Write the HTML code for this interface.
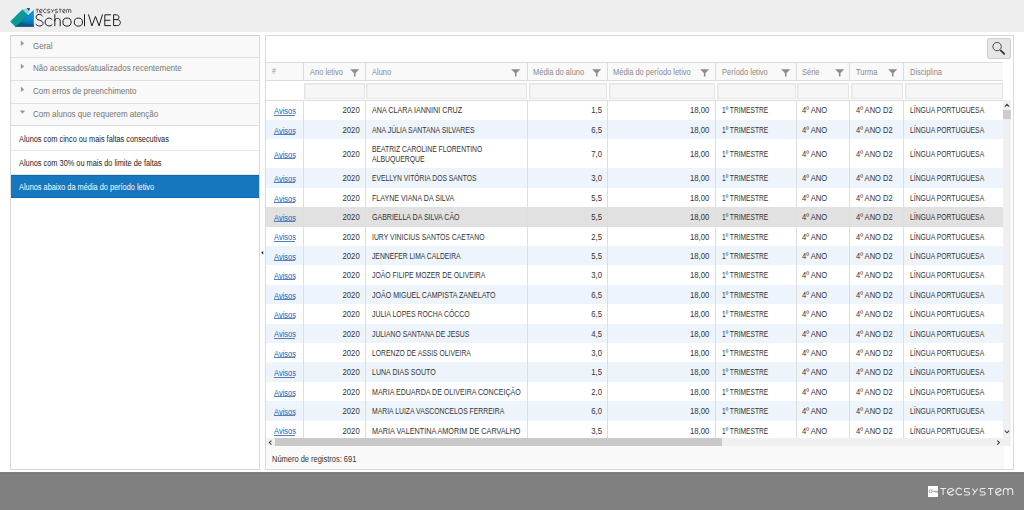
<!DOCTYPE html>
<html><head><meta charset="utf-8"><title>School WEB</title>
<style>
html,body{margin:0;padding:0;width:1024px;height:510px;overflow:hidden;background:#fff;}
body{position:relative;font-family:"Liberation Sans",sans-serif;}
.a{position:absolute;}
.t{position:absolute;white-space:nowrap;line-height:1;}
</style></head><body>
<div class="a" style="left:0.00px;top:0.00px;width:1024.00px;height:31.50px;background:#eeeeee"></div>
<svg class="a" style="left:0;top:0" width="40" height="32" viewBox="0 0 40 32">
<defs><linearGradient id="bg1" x1="0" y1="0" x2="0" y2="1"><stop offset="0" stop-color="#0e9be0"/><stop offset="0.6" stop-color="#0a86cc"/><stop offset="1" stop-color="#0b4f8a"/></linearGradient></defs>
<polygon points="33.8,9.8 33.8,26.8 15.1,26.8" fill="url(#bg1)"/>
<polygon points="15.1,26.8 33.8,26.8 33.8,25.2 21,22.5" fill="#0b5a78" opacity="0.8"/>
<polygon points="10.2,21.6 22.3,9.5 27.8,15 15.6,27" fill="#0a9a94"/>
<polygon points="22.3,9.5 26.2,8.4 29.4,11.6 27.8,15" fill="#8ed4f2"/>
<polygon points="26.5,8.3 29.9,7.9 29.2,11.2" fill="#0c4a52"/>
<line x1="28.0" y1="15.0" x2="15.6" y2="26.9" stroke="#1d5a66" stroke-width="0.7"/>
<line x1="22.5" y1="9.6" x2="27.9" y2="15.0" stroke="#4f8f96" stroke-width="0.6"/>
</svg>
<svg class="a" style="left:0;top:0" width="80" height="20"><path transform="translate(34.74,5.79) scale(0.484,0.54)" d="M2.2,6.5 H8.1 M5.1,6.5 V13 M9.9,11.3 L15.8,8.2 A3.35,3.35 0 1 0 15.6,11.7 M23.9,7.4 A3.35,3.35 0 1 0 23.9,11.6 M31.7,6.5 H28.1 A1.75,1.75 0 0 0 28.1,10 H30 A1.5,1.5 0 0 1 30,13 H26.1 M34.3,6.5 L36.9,9.9 M39.7,6.5 L35,13 M47.4,6.5 H43.8 A1.75,1.75 0 0 0 43.8,10 H45.7 A1.5,1.5 0 0 1 45.7,13 H41.8 M49.9,6.5 H55.4 M52.6,6.5 V13 M57.9,11.3 L63.2,8.2 A3.0,3.35 0 1 0 63.0,11.7 M65.3,13 V8.9 A2.35,2.4 0 0 1 70,8.9 V13 M70,8.9 A2.35,2.4 0 0 1 74.7,8.9 V13" fill="none" stroke="#3a3a3a" stroke-width="1.5"/></svg>
<svg class="a" style="left:0;top:0" width="130" height="32" viewBox="0 0 130 32"><path d="M42.6,16.4 C41.8,15 40.6,14.4 39.3,14.4 C37.4,14.4 36.1,15.6 36.1,17.2 C36.1,18.9 37.4,19.6 39.4,20.2 C41.6,20.8 43.1,21.7 43.1,23.3 C43.1,25 41.6,26 39.5,26 C37.8,26 36.4,25.1 35.6,23.8 M52.3,19.8 A3.95,3.95 0 1 0 52.3,24.3 M54.8,14.2 V26.2 M54.8,21.2 C54.8,19.3 56,18.3 57.6,18.3 C59.2,18.3 60.2,19.3 60.2,21.1 V26.2 M71.1,22.1 A4.1,4.05 0 1 0 62.9,22.1 A4.1,4.05 0 1 0 71.1,22.1 M82.5,22.1 A4.1,4.05 0 1 0 74.3,22.1 A4.1,4.05 0 1 0 82.5,22.1 M84.5,14.2 V26.2 M88.5,14.4 L91.9,25.9 L95.5,16.4 L99.1,25.9 L102.5,14.4 M110.9,14.8 H104.8 V25.6 H110.9 M104.8,20.3 H110.3 M113.6,14.8 V25.6 H117.3 C119.2,25.6 120.3,24.4 120.3,22.5 C120.3,20.7 119.1,19.6 117.1,19.6 H113.6 M116.3,19.6 C117.9,19.6 118.9,18.6 118.9,17.2 C118.9,15.7 117.9,14.8 116.3,14.8 H113.6" fill="none" stroke="#1e1e1e" stroke-width="1.0"/></svg>
<div class="a" style="left:10.25px;top:35.25px;width:249.35px;height:434.25px;background:#fff;border:1px solid #d9d9d9;border-top-color:#cfcfcf;box-sizing:border-box"></div>
<div class="a" style="left:11.25px;top:36.25px;width:247.35px;height:22.15px;background:#f9f9f9;border-bottom:1px solid #dedede;box-sizing:border-box"></div>
<div class="t" style="left:32.50px;top:40.53px;font-size:9.8px;color:#757575;transform:scaleX(0.815);transform-origin:0 0;">Geral</div>
<svg class="a" style="left:20px;top:39.85px" width="6" height="8"><polygon points="0.8,0.6 4.1,3.4 0.8,6.1" fill="#999"/></svg>
<div class="a" style="left:11.25px;top:58.40px;width:247.35px;height:22.60px;background:#f9f9f9;border-bottom:1px solid #dedede;box-sizing:border-box"></div>
<div class="t" style="left:32.50px;top:63.40px;font-size:9.8px;color:#757575;transform:scaleX(0.815);transform-origin:0 0;">Não acessados/atualizados recentemente</div>
<svg class="a" style="left:20px;top:63.00px" width="6" height="8"><polygon points="0.8,0.6 4.1,3.4 0.8,6.1" fill="#999"/></svg>
<div class="a" style="left:11.25px;top:81.00px;width:247.35px;height:22.80px;background:#f9f9f9;border-bottom:1px solid #dedede;box-sizing:border-box"></div>
<div class="t" style="left:32.50px;top:86.10px;font-size:9.8px;color:#757575;transform:scaleX(0.815);transform-origin:0 0;">Com erros de preenchimento</div>
<svg class="a" style="left:20px;top:85.60px" width="6" height="8"><polygon points="0.8,0.6 4.1,3.4 0.8,6.1" fill="#999"/></svg>
<div class="a" style="left:11.25px;top:103.80px;width:247.35px;height:22.70px;background:#f9f9f9;border-bottom:1px solid #dedede;box-sizing:border-box"></div>
<div class="t" style="left:32.50px;top:108.85px;font-size:9.8px;color:#757575;transform:scaleX(0.815);transform-origin:0 0;">Com alunos que requerem atenção</div>
<svg class="a" style="left:19px;top:109.80px" width="8" height="5"><polygon points="0.7,0.6 6.3,0.6 3.5,3.8" fill="#9a9a9a"/></svg>
<div class="a" style="left:11.25px;top:126.50px;width:247.35px;height:24.00px;background:#fff;border-bottom:1px solid #e6e6e6;box-sizing:border-box"></div>
<div class="t" style="left:18.80px;top:135.47px;font-size:8.9px;color:#222;transform:scaleX(0.83);transform-origin:0 0;">Alunos com cinco ou mais faltas consecutivas</div>
<div class="a" style="left:11.25px;top:150.50px;width:247.35px;height:24.00px;background:#fff;border-bottom:1px solid #e6e6e6;box-sizing:border-box"></div>
<div class="t" style="left:18.80px;top:159.47px;font-size:8.9px;color:#222;transform:scaleX(0.83);transform-origin:0 0;">Alunos com 30% ou mais do limite de faltas</div>
<div class="a" style="left:11.25px;top:174.50px;width:247.85px;height:23.70px;background:#1676be;border-top:1px solid #0b69b3;border-bottom:1px solid #0b69b3;box-sizing:border-box"></div>
<div class="t" style="left:18.80px;top:183.32px;font-size:8.9px;color:#ffffff;transform:scaleX(0.83);transform-origin:0 0;">Alunos abaixo da média do período letivo</div>
<svg class="a" style="left:260px;top:250px" width="5" height="6"><polygon points="1.2,2.7 3.2,1.0 3.2,4.4" fill="#111"/></svg>
<div class="a" style="left:265.25px;top:35.25px;width:748.35px;height:434.25px;background:#fff;border:1px solid #d9d9d9;box-sizing:border-box"></div>
<div class="a" style="left:987.10px;top:38.10px;width:23.80px;height:20.60px;background:#e6e6e6;border:1px solid #cfcfcf;border-radius:2px;box-sizing:border-box"></div>
<svg class="a" style="left:990px;top:40px" width="18" height="18" viewBox="0 0 18 18">
<circle cx="7.1" cy="6.6" r="4.2" fill="none" stroke="#3a3a3a" stroke-width="0.9"/>
<line x1="10.9" y1="10.6" x2="14.2" y2="13.8" stroke="#333" stroke-width="1.8" stroke-linecap="round"/>
</svg>
<div class="a" style="left:266.25px;top:62.00px;width:736.95px;height:18.50px;background:#f9f9f9;border-top:1px solid #dcdcdc;border-bottom:1px solid #dcdcdc;box-sizing:border-box"></div>
<div class="a" style="left:266.25px;top:80.50px;width:736.95px;height:19.90px;background:#fff"></div>
<div class="a" style="left:302.90px;top:63.00px;width:1.00px;height:16.50px;background:#dcdcdc"></div>
<div class="a" style="left:364.75px;top:63.00px;width:1.00px;height:16.50px;background:#dcdcdc"></div>
<div class="a" style="left:527.00px;top:63.00px;width:1.00px;height:16.50px;background:#dcdcdc"></div>
<div class="a" style="left:607.00px;top:63.00px;width:1.00px;height:16.50px;background:#dcdcdc"></div>
<div class="a" style="left:715.25px;top:63.00px;width:1.00px;height:16.50px;background:#dcdcdc"></div>
<div class="a" style="left:795.75px;top:63.00px;width:1.00px;height:16.50px;background:#dcdcdc"></div>
<div class="a" style="left:849.25px;top:63.00px;width:1.00px;height:16.50px;background:#dcdcdc"></div>
<div class="a" style="left:903.00px;top:63.00px;width:1.00px;height:16.50px;background:#dcdcdc"></div>
<div class="a" style="left:304.40px;top:83.00px;width:60.25px;height:15.60px;background:#f6f6f6;border:1px solid #e4e4e4;box-sizing:border-box;box-shadow:inset 1px 1px 0 #eeeeee"></div>
<div class="a" style="left:366.25px;top:83.00px;width:160.65px;height:15.60px;background:#f6f6f6;border:1px solid #e4e4e4;box-sizing:border-box;box-shadow:inset 1px 1px 0 #eeeeee"></div>
<div class="a" style="left:528.50px;top:83.00px;width:78.40px;height:15.60px;background:#f6f6f6;border:1px solid #e4e4e4;box-sizing:border-box;box-shadow:inset 1px 1px 0 #eeeeee"></div>
<div class="a" style="left:608.50px;top:83.00px;width:106.65px;height:15.60px;background:#f6f6f6;border:1px solid #e4e4e4;box-sizing:border-box;box-shadow:inset 1px 1px 0 #eeeeee"></div>
<div class="a" style="left:716.75px;top:83.00px;width:78.90px;height:15.60px;background:#f6f6f6;border:1px solid #e4e4e4;box-sizing:border-box;box-shadow:inset 1px 1px 0 #eeeeee"></div>
<div class="a" style="left:797.25px;top:83.00px;width:51.90px;height:15.60px;background:#f6f6f6;border:1px solid #e4e4e4;box-sizing:border-box;box-shadow:inset 1px 1px 0 #eeeeee"></div>
<div class="a" style="left:850.75px;top:83.00px;width:52.15px;height:15.60px;background:#f6f6f6;border:1px solid #e4e4e4;box-sizing:border-box;box-shadow:inset 1px 1px 0 #eeeeee"></div>
<div class="a" style="left:904.50px;top:83.00px;width:98.10px;height:15.60px;background:#f6f6f6;border:1px solid #e4e4e4;box-sizing:border-box;box-shadow:inset 1px 1px 0 #eeeeee"></div>
<div class="t" style="left:272.00px;top:68.46px;font-size:8.2px;color:#999;transform:scaleX(0.85);transform-origin:0 0;">#</div>
<div class="t" style="left:309.50px;top:68.15px;font-size:8.8px;color:#8a8a8a;transform:scaleX(0.85);transform-origin:0 0;">Ano letivo</div>
<div class="t" style="left:371.50px;top:68.15px;font-size:8.8px;color:#8a8a8a;transform:scaleX(0.85);transform-origin:0 0;">Aluno</div>
<div class="t" style="left:533.25px;top:68.15px;font-size:8.8px;color:#8a8a8a;transform:scaleX(0.85);transform-origin:0 0;">Média do aluno</div>
<div class="t" style="left:613.25px;top:68.15px;font-size:8.8px;color:#8a8a8a;transform:scaleX(0.85);transform-origin:0 0;">Média do período letivo</div>
<div class="t" style="left:721.50px;top:68.15px;font-size:8.8px;color:#8a8a8a;transform:scaleX(0.85);transform-origin:0 0;">Período letivo</div>
<div class="t" style="left:801.75px;top:68.15px;font-size:8.8px;color:#8a8a8a;transform:scaleX(0.85);transform-origin:0 0;">Série</div>
<div class="t" style="left:855.50px;top:68.15px;font-size:8.8px;color:#8a8a8a;transform:scaleX(0.85);transform-origin:0 0;">Turma</div>
<div class="t" style="left:909.75px;top:68.15px;font-size:8.8px;color:#8a8a8a;transform:scaleX(0.85);transform-origin:0 0;">Disciplina</div>
<svg class="a" style="left:350.20px;top:68.8px" width="10" height="8" viewBox="0 0 10 8"><polygon points="0.1,0.2 9.3,0.2 5.5,4.0 5.5,7.6 3.9,7.6 3.9,4.0" fill="#8c8c8c"/></svg>
<svg class="a" style="left:511.45px;top:68.8px" width="10" height="8" viewBox="0 0 10 8"><polygon points="0.1,0.2 9.3,0.2 5.5,4.0 5.5,7.6 3.9,7.6 3.9,4.0" fill="#8c8c8c"/></svg>
<svg class="a" style="left:592.20px;top:68.8px" width="10" height="8" viewBox="0 0 10 8"><polygon points="0.1,0.2 9.3,0.2 5.5,4.0 5.5,7.6 3.9,7.6 3.9,4.0" fill="#8c8c8c"/></svg>
<svg class="a" style="left:700.20px;top:68.8px" width="10" height="8" viewBox="0 0 10 8"><polygon points="0.1,0.2 9.3,0.2 5.5,4.0 5.5,7.6 3.9,7.6 3.9,4.0" fill="#8c8c8c"/></svg>
<svg class="a" style="left:780.70px;top:68.8px" width="10" height="8" viewBox="0 0 10 8"><polygon points="0.1,0.2 9.3,0.2 5.5,4.0 5.5,7.6 3.9,7.6 3.9,4.0" fill="#8c8c8c"/></svg>
<svg class="a" style="left:834.95px;top:68.8px" width="10" height="8" viewBox="0 0 10 8"><polygon points="0.1,0.2 9.3,0.2 5.5,4.0 5.5,7.6 3.9,7.6 3.9,4.0" fill="#8c8c8c"/></svg>
<svg class="a" style="left:888.20px;top:68.8px" width="10" height="8" viewBox="0 0 10 8"><polygon points="0.1,0.2 9.3,0.2 5.5,4.0 5.5,7.6 3.9,7.6 3.9,4.0" fill="#8c8c8c"/></svg>
<div class="a" style="left:266.25px;top:100.4px;width:736.95px;height:337.50px;overflow:hidden">
<div class="a" style="left:0;top:0.00px;width:736.95px;height:19.41px;background:#fff"></div>
<div class="a" style="left:0;top:19.41px;width:736.95px;height:19.41px;background:#edf4fb"></div>
<div class="a" style="left:0;top:38.82px;width:736.95px;height:29.12px;background:#fff"></div>
<div class="a" style="left:0;top:67.94px;width:736.95px;height:19.41px;background:#edf4fb"></div>
<div class="a" style="left:0;top:87.35px;width:736.95px;height:19.41px;background:#fff"></div>
<div class="a" style="left:0;top:106.76px;width:736.95px;height:19.41px;background:#e1e1e1"></div>
<div class="a" style="left:0;top:126.17px;width:736.95px;height:19.41px;background:#fff"></div>
<div class="a" style="left:0;top:145.58px;width:736.95px;height:19.41px;background:#edf4fb"></div>
<div class="a" style="left:0;top:164.99px;width:736.95px;height:19.41px;background:#fff"></div>
<div class="a" style="left:0;top:184.40px;width:736.95px;height:19.41px;background:#edf4fb"></div>
<div class="a" style="left:0;top:203.81px;width:736.95px;height:19.41px;background:#fff"></div>
<div class="a" style="left:0;top:223.22px;width:736.95px;height:19.41px;background:#edf4fb"></div>
<div class="a" style="left:0;top:242.63px;width:736.95px;height:19.41px;background:#fff"></div>
<div class="a" style="left:0;top:262.04px;width:736.95px;height:19.41px;background:#edf4fb"></div>
<div class="a" style="left:0;top:281.45px;width:736.95px;height:19.41px;background:#fff"></div>
<div class="a" style="left:0;top:300.86px;width:736.95px;height:19.41px;background:#edf4fb"></div>
<div class="a" style="left:0;top:320.27px;width:736.95px;height:19.41px;background:#fff"></div>
<div class="a" style="left:36.65px;top:0;width:1px;height:337.50px;background:#dedede"></div>
<div class="a" style="left:98.50px;top:0;width:1px;height:337.50px;background:#dedede"></div>
<div class="a" style="left:260.75px;top:0;width:1px;height:337.50px;background:#dedede"></div>
<div class="a" style="left:340.75px;top:0;width:1px;height:337.50px;background:#dedede"></div>
<div class="a" style="left:449.00px;top:0;width:1px;height:337.50px;background:#dedede"></div>
<div class="a" style="left:529.50px;top:0;width:1px;height:337.50px;background:#dedede"></div>
<div class="a" style="left:583.00px;top:0;width:1px;height:337.50px;background:#dedede"></div>
<div class="a" style="left:636.75px;top:0;width:1px;height:337.50px;background:#dedede"></div>
</div>
<div class="a" style="left:0;top:100.4px;width:1024px;height:337.50px;overflow:hidden">
<div class="t" style="left:274.40px;top:6.83px;font-size:9.3px;color:#2563b0;transform:scaleX(0.81);transform-origin:0 0;">Avisos</div>
<div class="a" style="left:274.4px;top:14.11px;width:21px;height:1px;background:#4a82c4"></div>
<div class="t" style="right:664.30px;top:6.03px;font-size:9.3px;color:#333333;transform:scaleX(0.83);transform-origin:100% 0;">2020</div>
<div class="t" style="left:371.50px;top:6.03px;font-size:9.3px;color:#333333;transform:scaleX(0.772);transform-origin:0 0;">ANA CLARA IANNINI CRUZ</div>
<div class="t" style="right:422.20px;top:6.03px;font-size:9.3px;color:#333333;transform:scaleX(0.83);transform-origin:100% 0;">1,5</div>
<div class="t" style="right:314.40px;top:6.03px;font-size:9.3px;color:#333333;transform:scaleX(0.83);transform-origin:100% 0;">18,00</div>
<div class="t" style="left:721.50px;top:6.03px;font-size:9.3px;color:#333333;transform:scaleX(0.715);transform-origin:0 0;">1º TRIMESTRE</div>
<div class="t" style="left:801.75px;top:6.03px;font-size:9.3px;color:#333333;transform:scaleX(0.82);transform-origin:0 0;">4º ANO</div>
<div class="t" style="left:855.50px;top:6.03px;font-size:9.3px;color:#333333;transform:scaleX(0.81);transform-origin:0 0;">4º ANO D2</div>
<div class="t" style="left:909.75px;top:6.03px;font-size:9.3px;color:#333333;transform:scaleX(0.73);transform-origin:0 0;">LÍNGUA PORTUGUESA</div>
<div class="t" style="left:274.40px;top:26.24px;font-size:9.3px;color:#2563b0;transform:scaleX(0.81);transform-origin:0 0;">Avisos</div>
<div class="a" style="left:274.4px;top:33.52px;width:21px;height:1px;background:#4a82c4"></div>
<div class="t" style="right:664.30px;top:25.44px;font-size:9.3px;color:#333333;transform:scaleX(0.83);transform-origin:100% 0;">2020</div>
<div class="t" style="left:371.50px;top:25.44px;font-size:9.3px;color:#333333;transform:scaleX(0.743);transform-origin:0 0;">ANA JÚLIA SANTANA SILVARES</div>
<div class="t" style="right:422.20px;top:25.44px;font-size:9.3px;color:#333333;transform:scaleX(0.83);transform-origin:100% 0;">6,5</div>
<div class="t" style="right:314.40px;top:25.44px;font-size:9.3px;color:#333333;transform:scaleX(0.83);transform-origin:100% 0;">18,00</div>
<div class="t" style="left:721.50px;top:25.44px;font-size:9.3px;color:#333333;transform:scaleX(0.715);transform-origin:0 0;">1º TRIMESTRE</div>
<div class="t" style="left:801.75px;top:25.44px;font-size:9.3px;color:#333333;transform:scaleX(0.82);transform-origin:0 0;">4º ANO</div>
<div class="t" style="left:855.50px;top:25.44px;font-size:9.3px;color:#333333;transform:scaleX(0.81);transform-origin:0 0;">4º ANO D2</div>
<div class="t" style="left:909.75px;top:25.44px;font-size:9.3px;color:#333333;transform:scaleX(0.73);transform-origin:0 0;">LÍNGUA PORTUGUESA</div>
<div class="t" style="left:274.40px;top:50.51px;font-size:9.3px;color:#2563b0;transform:scaleX(0.81);transform-origin:0 0;">Avisos</div>
<div class="a" style="left:274.4px;top:57.78px;width:21px;height:1px;background:#4a82c4"></div>
<div class="t" style="right:664.30px;top:49.71px;font-size:9.3px;color:#333333;transform:scaleX(0.83);transform-origin:100% 0;">2020</div>
<div class="t" style="left:371.50px;top:44.81px;font-size:9.3px;color:#333333;transform:scaleX(0.729);transform-origin:0 0;">BEATRIZ CAROLINE FLORENTINO</div>
<div class="t" style="left:371.50px;top:54.61px;font-size:9.3px;color:#333333;transform:scaleX(0.738);transform-origin:0 0;">ALBUQUERQUE</div>
<div class="t" style="right:422.20px;top:49.71px;font-size:9.3px;color:#333333;transform:scaleX(0.83);transform-origin:100% 0;">7,0</div>
<div class="t" style="right:314.40px;top:49.71px;font-size:9.3px;color:#333333;transform:scaleX(0.83);transform-origin:100% 0;">18,00</div>
<div class="t" style="left:721.50px;top:49.71px;font-size:9.3px;color:#333333;transform:scaleX(0.715);transform-origin:0 0;">1º TRIMESTRE</div>
<div class="t" style="left:801.75px;top:49.71px;font-size:9.3px;color:#333333;transform:scaleX(0.82);transform-origin:0 0;">4º ANO</div>
<div class="t" style="left:855.50px;top:49.71px;font-size:9.3px;color:#333333;transform:scaleX(0.81);transform-origin:0 0;">4º ANO D2</div>
<div class="t" style="left:909.75px;top:49.71px;font-size:9.3px;color:#333333;transform:scaleX(0.73);transform-origin:0 0;">LÍNGUA PORTUGUESA</div>
<div class="t" style="left:274.40px;top:74.77px;font-size:9.3px;color:#2563b0;transform:scaleX(0.81);transform-origin:0 0;">Avisos</div>
<div class="a" style="left:274.4px;top:82.05px;width:21px;height:1px;background:#4a82c4"></div>
<div class="t" style="right:664.30px;top:73.97px;font-size:9.3px;color:#333333;transform:scaleX(0.83);transform-origin:100% 0;">2020</div>
<div class="t" style="left:371.50px;top:73.97px;font-size:9.3px;color:#333333;transform:scaleX(0.726);transform-origin:0 0;">EVELLYN VITÓRIA DOS SANTOS</div>
<div class="t" style="right:422.20px;top:73.97px;font-size:9.3px;color:#333333;transform:scaleX(0.83);transform-origin:100% 0;">3,0</div>
<div class="t" style="right:314.40px;top:73.97px;font-size:9.3px;color:#333333;transform:scaleX(0.83);transform-origin:100% 0;">18,00</div>
<div class="t" style="left:721.50px;top:73.97px;font-size:9.3px;color:#333333;transform:scaleX(0.715);transform-origin:0 0;">1º TRIMESTRE</div>
<div class="t" style="left:801.75px;top:73.97px;font-size:9.3px;color:#333333;transform:scaleX(0.82);transform-origin:0 0;">4º ANO</div>
<div class="t" style="left:855.50px;top:73.97px;font-size:9.3px;color:#333333;transform:scaleX(0.81);transform-origin:0 0;">4º ANO D2</div>
<div class="t" style="left:909.75px;top:73.97px;font-size:9.3px;color:#333333;transform:scaleX(0.73);transform-origin:0 0;">LÍNGUA PORTUGUESA</div>
<div class="t" style="left:274.40px;top:94.18px;font-size:9.3px;color:#2563b0;transform:scaleX(0.81);transform-origin:0 0;">Avisos</div>
<div class="a" style="left:274.4px;top:101.45px;width:21px;height:1px;background:#4a82c4"></div>
<div class="t" style="right:664.30px;top:93.38px;font-size:9.3px;color:#333333;transform:scaleX(0.83);transform-origin:100% 0;">2020</div>
<div class="t" style="left:371.50px;top:93.38px;font-size:9.3px;color:#333333;transform:scaleX(0.761);transform-origin:0 0;">FLAYNE VIANA DA SILVA</div>
<div class="t" style="right:422.20px;top:93.38px;font-size:9.3px;color:#333333;transform:scaleX(0.83);transform-origin:100% 0;">5,5</div>
<div class="t" style="right:314.40px;top:93.38px;font-size:9.3px;color:#333333;transform:scaleX(0.83);transform-origin:100% 0;">18,00</div>
<div class="t" style="left:721.50px;top:93.38px;font-size:9.3px;color:#333333;transform:scaleX(0.715);transform-origin:0 0;">1º TRIMESTRE</div>
<div class="t" style="left:801.75px;top:93.38px;font-size:9.3px;color:#333333;transform:scaleX(0.82);transform-origin:0 0;">4º ANO</div>
<div class="t" style="left:855.50px;top:93.38px;font-size:9.3px;color:#333333;transform:scaleX(0.81);transform-origin:0 0;">4º ANO D2</div>
<div class="t" style="left:909.75px;top:93.38px;font-size:9.3px;color:#333333;transform:scaleX(0.73);transform-origin:0 0;">LÍNGUA PORTUGUESA</div>
<div class="t" style="left:274.40px;top:113.59px;font-size:9.3px;color:#2563b0;transform:scaleX(0.81);transform-origin:0 0;">Avisos</div>
<div class="a" style="left:274.4px;top:120.86px;width:21px;height:1px;background:#4a82c4"></div>
<div class="t" style="right:664.30px;top:112.79px;font-size:9.3px;color:#333333;transform:scaleX(0.83);transform-origin:100% 0;">2020</div>
<div class="t" style="left:371.50px;top:112.79px;font-size:9.3px;color:#333333;transform:scaleX(0.755);transform-origin:0 0;">GABRIELLA DA SILVA CÃO</div>
<div class="t" style="right:422.20px;top:112.79px;font-size:9.3px;color:#333333;transform:scaleX(0.83);transform-origin:100% 0;">5,5</div>
<div class="t" style="right:314.40px;top:112.79px;font-size:9.3px;color:#333333;transform:scaleX(0.83);transform-origin:100% 0;">18,00</div>
<div class="t" style="left:721.50px;top:112.79px;font-size:9.3px;color:#333333;transform:scaleX(0.715);transform-origin:0 0;">1º TRIMESTRE</div>
<div class="t" style="left:801.75px;top:112.79px;font-size:9.3px;color:#333333;transform:scaleX(0.82);transform-origin:0 0;">4º ANO</div>
<div class="t" style="left:855.50px;top:112.79px;font-size:9.3px;color:#333333;transform:scaleX(0.81);transform-origin:0 0;">4º ANO D2</div>
<div class="t" style="left:909.75px;top:112.79px;font-size:9.3px;color:#333333;transform:scaleX(0.73);transform-origin:0 0;">LÍNGUA PORTUGUESA</div>
<div class="t" style="left:274.40px;top:133.00px;font-size:9.3px;color:#2563b0;transform:scaleX(0.81);transform-origin:0 0;">Avisos</div>
<div class="a" style="left:274.4px;top:140.27px;width:21px;height:1px;background:#4a82c4"></div>
<div class="t" style="right:664.30px;top:132.20px;font-size:9.3px;color:#333333;transform:scaleX(0.83);transform-origin:100% 0;">2020</div>
<div class="t" style="left:371.50px;top:132.20px;font-size:9.3px;color:#333333;transform:scaleX(0.739);transform-origin:0 0;">IURY VINICIUS SANTOS CAETANO</div>
<div class="t" style="right:422.20px;top:132.20px;font-size:9.3px;color:#333333;transform:scaleX(0.83);transform-origin:100% 0;">2,5</div>
<div class="t" style="right:314.40px;top:132.20px;font-size:9.3px;color:#333333;transform:scaleX(0.83);transform-origin:100% 0;">18,00</div>
<div class="t" style="left:721.50px;top:132.20px;font-size:9.3px;color:#333333;transform:scaleX(0.715);transform-origin:0 0;">1º TRIMESTRE</div>
<div class="t" style="left:801.75px;top:132.20px;font-size:9.3px;color:#333333;transform:scaleX(0.82);transform-origin:0 0;">4º ANO</div>
<div class="t" style="left:855.50px;top:132.20px;font-size:9.3px;color:#333333;transform:scaleX(0.81);transform-origin:0 0;">4º ANO D2</div>
<div class="t" style="left:909.75px;top:132.20px;font-size:9.3px;color:#333333;transform:scaleX(0.73);transform-origin:0 0;">LÍNGUA PORTUGUESA</div>
<div class="t" style="left:274.40px;top:152.41px;font-size:9.3px;color:#2563b0;transform:scaleX(0.81);transform-origin:0 0;">Avisos</div>
<div class="a" style="left:274.4px;top:159.68px;width:21px;height:1px;background:#4a82c4"></div>
<div class="t" style="right:664.30px;top:151.61px;font-size:9.3px;color:#333333;transform:scaleX(0.83);transform-origin:100% 0;">2020</div>
<div class="t" style="left:371.50px;top:151.61px;font-size:9.3px;color:#333333;transform:scaleX(0.726);transform-origin:0 0;">JENNEFER LIMA CALDEIRA</div>
<div class="t" style="right:422.20px;top:151.61px;font-size:9.3px;color:#333333;transform:scaleX(0.83);transform-origin:100% 0;">5,5</div>
<div class="t" style="right:314.40px;top:151.61px;font-size:9.3px;color:#333333;transform:scaleX(0.83);transform-origin:100% 0;">18,00</div>
<div class="t" style="left:721.50px;top:151.61px;font-size:9.3px;color:#333333;transform:scaleX(0.715);transform-origin:0 0;">1º TRIMESTRE</div>
<div class="t" style="left:801.75px;top:151.61px;font-size:9.3px;color:#333333;transform:scaleX(0.82);transform-origin:0 0;">4º ANO</div>
<div class="t" style="left:855.50px;top:151.61px;font-size:9.3px;color:#333333;transform:scaleX(0.81);transform-origin:0 0;">4º ANO D2</div>
<div class="t" style="left:909.75px;top:151.61px;font-size:9.3px;color:#333333;transform:scaleX(0.73);transform-origin:0 0;">LÍNGUA PORTUGUESA</div>
<div class="t" style="left:274.40px;top:171.82px;font-size:9.3px;color:#2563b0;transform:scaleX(0.81);transform-origin:0 0;">Avisos</div>
<div class="a" style="left:274.4px;top:179.09px;width:21px;height:1px;background:#4a82c4"></div>
<div class="t" style="right:664.30px;top:171.02px;font-size:9.3px;color:#333333;transform:scaleX(0.83);transform-origin:100% 0;">2020</div>
<div class="t" style="left:371.50px;top:171.02px;font-size:9.3px;color:#333333;transform:scaleX(0.739);transform-origin:0 0;">JOÃO FILIPE MOZER DE OLIVEIRA</div>
<div class="t" style="right:422.20px;top:171.02px;font-size:9.3px;color:#333333;transform:scaleX(0.83);transform-origin:100% 0;">3,0</div>
<div class="t" style="right:314.40px;top:171.02px;font-size:9.3px;color:#333333;transform:scaleX(0.83);transform-origin:100% 0;">18,00</div>
<div class="t" style="left:721.50px;top:171.02px;font-size:9.3px;color:#333333;transform:scaleX(0.715);transform-origin:0 0;">1º TRIMESTRE</div>
<div class="t" style="left:801.75px;top:171.02px;font-size:9.3px;color:#333333;transform:scaleX(0.82);transform-origin:0 0;">4º ANO</div>
<div class="t" style="left:855.50px;top:171.02px;font-size:9.3px;color:#333333;transform:scaleX(0.81);transform-origin:0 0;">4º ANO D2</div>
<div class="t" style="left:909.75px;top:171.02px;font-size:9.3px;color:#333333;transform:scaleX(0.73);transform-origin:0 0;">LÍNGUA PORTUGUESA</div>
<div class="t" style="left:274.40px;top:191.23px;font-size:9.3px;color:#2563b0;transform:scaleX(0.81);transform-origin:0 0;">Avisos</div>
<div class="a" style="left:274.4px;top:198.50px;width:21px;height:1px;background:#4a82c4"></div>
<div class="t" style="right:664.30px;top:190.43px;font-size:9.3px;color:#333333;transform:scaleX(0.83);transform-origin:100% 0;">2020</div>
<div class="t" style="left:371.50px;top:190.43px;font-size:9.3px;color:#333333;transform:scaleX(0.758);transform-origin:0 0;">JOÃO MIGUEL CAMPISTA ZANELATO</div>
<div class="t" style="right:422.20px;top:190.43px;font-size:9.3px;color:#333333;transform:scaleX(0.83);transform-origin:100% 0;">6,5</div>
<div class="t" style="right:314.40px;top:190.43px;font-size:9.3px;color:#333333;transform:scaleX(0.83);transform-origin:100% 0;">18,00</div>
<div class="t" style="left:721.50px;top:190.43px;font-size:9.3px;color:#333333;transform:scaleX(0.715);transform-origin:0 0;">1º TRIMESTRE</div>
<div class="t" style="left:801.75px;top:190.43px;font-size:9.3px;color:#333333;transform:scaleX(0.82);transform-origin:0 0;">4º ANO</div>
<div class="t" style="left:855.50px;top:190.43px;font-size:9.3px;color:#333333;transform:scaleX(0.81);transform-origin:0 0;">4º ANO D2</div>
<div class="t" style="left:909.75px;top:190.43px;font-size:9.3px;color:#333333;transform:scaleX(0.73);transform-origin:0 0;">LÍNGUA PORTUGUESA</div>
<div class="t" style="left:274.40px;top:210.64px;font-size:9.3px;color:#2563b0;transform:scaleX(0.81);transform-origin:0 0;">Avisos</div>
<div class="a" style="left:274.4px;top:217.91px;width:21px;height:1px;background:#4a82c4"></div>
<div class="t" style="right:664.30px;top:209.84px;font-size:9.3px;color:#333333;transform:scaleX(0.83);transform-origin:100% 0;">2020</div>
<div class="t" style="left:371.50px;top:209.84px;font-size:9.3px;color:#333333;transform:scaleX(0.745);transform-origin:0 0;">JULIA LOPES ROCHA CÔCCO</div>
<div class="t" style="right:422.20px;top:209.84px;font-size:9.3px;color:#333333;transform:scaleX(0.83);transform-origin:100% 0;">6,5</div>
<div class="t" style="right:314.40px;top:209.84px;font-size:9.3px;color:#333333;transform:scaleX(0.83);transform-origin:100% 0;">18,00</div>
<div class="t" style="left:721.50px;top:209.84px;font-size:9.3px;color:#333333;transform:scaleX(0.715);transform-origin:0 0;">1º TRIMESTRE</div>
<div class="t" style="left:801.75px;top:209.84px;font-size:9.3px;color:#333333;transform:scaleX(0.82);transform-origin:0 0;">4º ANO</div>
<div class="t" style="left:855.50px;top:209.84px;font-size:9.3px;color:#333333;transform:scaleX(0.81);transform-origin:0 0;">4º ANO D2</div>
<div class="t" style="left:909.75px;top:209.84px;font-size:9.3px;color:#333333;transform:scaleX(0.73);transform-origin:0 0;">LÍNGUA PORTUGUESA</div>
<div class="t" style="left:274.40px;top:230.05px;font-size:9.3px;color:#2563b0;transform:scaleX(0.81);transform-origin:0 0;">Avisos</div>
<div class="a" style="left:274.4px;top:237.33px;width:21px;height:1px;background:#4a82c4"></div>
<div class="t" style="right:664.30px;top:229.25px;font-size:9.3px;color:#333333;transform:scaleX(0.83);transform-origin:100% 0;">2020</div>
<div class="t" style="left:371.50px;top:229.25px;font-size:9.3px;color:#333333;transform:scaleX(0.733);transform-origin:0 0;">JULIANO SANTANA DE JESUS</div>
<div class="t" style="right:422.20px;top:229.25px;font-size:9.3px;color:#333333;transform:scaleX(0.83);transform-origin:100% 0;">4,5</div>
<div class="t" style="right:314.40px;top:229.25px;font-size:9.3px;color:#333333;transform:scaleX(0.83);transform-origin:100% 0;">18,00</div>
<div class="t" style="left:721.50px;top:229.25px;font-size:9.3px;color:#333333;transform:scaleX(0.715);transform-origin:0 0;">1º TRIMESTRE</div>
<div class="t" style="left:801.75px;top:229.25px;font-size:9.3px;color:#333333;transform:scaleX(0.82);transform-origin:0 0;">4º ANO</div>
<div class="t" style="left:855.50px;top:229.25px;font-size:9.3px;color:#333333;transform:scaleX(0.81);transform-origin:0 0;">4º ANO D2</div>
<div class="t" style="left:909.75px;top:229.25px;font-size:9.3px;color:#333333;transform:scaleX(0.73);transform-origin:0 0;">LÍNGUA PORTUGUESA</div>
<div class="t" style="left:274.40px;top:249.46px;font-size:9.3px;color:#2563b0;transform:scaleX(0.81);transform-origin:0 0;">Avisos</div>
<div class="a" style="left:274.4px;top:256.74px;width:21px;height:1px;background:#4a82c4"></div>
<div class="t" style="right:664.30px;top:248.66px;font-size:9.3px;color:#333333;transform:scaleX(0.83);transform-origin:100% 0;">2020</div>
<div class="t" style="left:371.50px;top:248.66px;font-size:9.3px;color:#333333;transform:scaleX(0.73);transform-origin:0 0;">LORENZO DE ASSIS OLIVEIRA</div>
<div class="t" style="right:422.20px;top:248.66px;font-size:9.3px;color:#333333;transform:scaleX(0.83);transform-origin:100% 0;">3,0</div>
<div class="t" style="right:314.40px;top:248.66px;font-size:9.3px;color:#333333;transform:scaleX(0.83);transform-origin:100% 0;">18,00</div>
<div class="t" style="left:721.50px;top:248.66px;font-size:9.3px;color:#333333;transform:scaleX(0.715);transform-origin:0 0;">1º TRIMESTRE</div>
<div class="t" style="left:801.75px;top:248.66px;font-size:9.3px;color:#333333;transform:scaleX(0.82);transform-origin:0 0;">4º ANO</div>
<div class="t" style="left:855.50px;top:248.66px;font-size:9.3px;color:#333333;transform:scaleX(0.81);transform-origin:0 0;">4º ANO D2</div>
<div class="t" style="left:909.75px;top:248.66px;font-size:9.3px;color:#333333;transform:scaleX(0.73);transform-origin:0 0;">LÍNGUA PORTUGUESA</div>
<div class="t" style="left:274.40px;top:268.87px;font-size:9.3px;color:#2563b0;transform:scaleX(0.81);transform-origin:0 0;">Avisos</div>
<div class="a" style="left:274.4px;top:276.15px;width:21px;height:1px;background:#4a82c4"></div>
<div class="t" style="right:664.30px;top:268.07px;font-size:9.3px;color:#333333;transform:scaleX(0.83);transform-origin:100% 0;">2020</div>
<div class="t" style="left:371.50px;top:268.07px;font-size:9.3px;color:#333333;transform:scaleX(0.759);transform-origin:0 0;">LUNA DIAS SOUTO</div>
<div class="t" style="right:422.20px;top:268.07px;font-size:9.3px;color:#333333;transform:scaleX(0.83);transform-origin:100% 0;">1,5</div>
<div class="t" style="right:314.40px;top:268.07px;font-size:9.3px;color:#333333;transform:scaleX(0.83);transform-origin:100% 0;">18,00</div>
<div class="t" style="left:721.50px;top:268.07px;font-size:9.3px;color:#333333;transform:scaleX(0.715);transform-origin:0 0;">1º TRIMESTRE</div>
<div class="t" style="left:801.75px;top:268.07px;font-size:9.3px;color:#333333;transform:scaleX(0.82);transform-origin:0 0;">4º ANO</div>
<div class="t" style="left:855.50px;top:268.07px;font-size:9.3px;color:#333333;transform:scaleX(0.81);transform-origin:0 0;">4º ANO D2</div>
<div class="t" style="left:909.75px;top:268.07px;font-size:9.3px;color:#333333;transform:scaleX(0.73);transform-origin:0 0;">LÍNGUA PORTUGUESA</div>
<div class="t" style="left:274.40px;top:288.28px;font-size:9.3px;color:#2563b0;transform:scaleX(0.81);transform-origin:0 0;">Avisos</div>
<div class="a" style="left:274.4px;top:295.56px;width:21px;height:1px;background:#4a82c4"></div>
<div class="t" style="right:664.30px;top:287.48px;font-size:9.3px;color:#333333;transform:scaleX(0.83);transform-origin:100% 0;">2020</div>
<div class="t" style="left:371.50px;top:287.48px;font-size:9.3px;color:#333333;transform:scaleX(0.76);transform-origin:0 0;">MARIA EDUARDA DE OLIVEIRA CONCEIÇÃO</div>
<div class="t" style="right:422.20px;top:287.48px;font-size:9.3px;color:#333333;transform:scaleX(0.83);transform-origin:100% 0;">2,0</div>
<div class="t" style="right:314.40px;top:287.48px;font-size:9.3px;color:#333333;transform:scaleX(0.83);transform-origin:100% 0;">18,00</div>
<div class="t" style="left:721.50px;top:287.48px;font-size:9.3px;color:#333333;transform:scaleX(0.715);transform-origin:0 0;">1º TRIMESTRE</div>
<div class="t" style="left:801.75px;top:287.48px;font-size:9.3px;color:#333333;transform:scaleX(0.82);transform-origin:0 0;">4º ANO</div>
<div class="t" style="left:855.50px;top:287.48px;font-size:9.3px;color:#333333;transform:scaleX(0.81);transform-origin:0 0;">4º ANO D2</div>
<div class="t" style="left:909.75px;top:287.48px;font-size:9.3px;color:#333333;transform:scaleX(0.73);transform-origin:0 0;">LÍNGUA PORTUGUESA</div>
<div class="t" style="left:274.40px;top:307.69px;font-size:9.3px;color:#2563b0;transform:scaleX(0.81);transform-origin:0 0;">Avisos</div>
<div class="a" style="left:274.4px;top:314.97px;width:21px;height:1px;background:#4a82c4"></div>
<div class="t" style="right:664.30px;top:306.89px;font-size:9.3px;color:#333333;transform:scaleX(0.83);transform-origin:100% 0;">2020</div>
<div class="t" style="left:371.50px;top:306.89px;font-size:9.3px;color:#333333;transform:scaleX(0.736);transform-origin:0 0;">MARIA LUIZA VASCONCELOS FERREIRA</div>
<div class="t" style="right:422.20px;top:306.89px;font-size:9.3px;color:#333333;transform:scaleX(0.83);transform-origin:100% 0;">6,0</div>
<div class="t" style="right:314.40px;top:306.89px;font-size:9.3px;color:#333333;transform:scaleX(0.83);transform-origin:100% 0;">18,00</div>
<div class="t" style="left:721.50px;top:306.89px;font-size:9.3px;color:#333333;transform:scaleX(0.715);transform-origin:0 0;">1º TRIMESTRE</div>
<div class="t" style="left:801.75px;top:306.89px;font-size:9.3px;color:#333333;transform:scaleX(0.82);transform-origin:0 0;">4º ANO</div>
<div class="t" style="left:855.50px;top:306.89px;font-size:9.3px;color:#333333;transform:scaleX(0.81);transform-origin:0 0;">4º ANO D2</div>
<div class="t" style="left:909.75px;top:306.89px;font-size:9.3px;color:#333333;transform:scaleX(0.73);transform-origin:0 0;">LÍNGUA PORTUGUESA</div>
<div class="t" style="left:274.40px;top:327.10px;font-size:9.3px;color:#2563b0;transform:scaleX(0.81);transform-origin:0 0;">Avisos</div>
<div class="a" style="left:274.4px;top:334.38px;width:21px;height:1px;background:#4a82c4"></div>
<div class="t" style="right:664.30px;top:326.30px;font-size:9.3px;color:#333333;transform:scaleX(0.83);transform-origin:100% 0;">2020</div>
<div class="t" style="left:371.50px;top:326.30px;font-size:9.3px;color:#333333;transform:scaleX(0.779);transform-origin:0 0;">MARIA VALENTINA AMORIM DE CARVALHO</div>
<div class="t" style="right:422.20px;top:326.30px;font-size:9.3px;color:#333333;transform:scaleX(0.83);transform-origin:100% 0;">3,5</div>
<div class="t" style="right:314.40px;top:326.30px;font-size:9.3px;color:#333333;transform:scaleX(0.83);transform-origin:100% 0;">18,00</div>
<div class="t" style="left:721.50px;top:326.30px;font-size:9.3px;color:#333333;transform:scaleX(0.715);transform-origin:0 0;">1º TRIMESTRE</div>
<div class="t" style="left:801.75px;top:326.30px;font-size:9.3px;color:#333333;transform:scaleX(0.82);transform-origin:0 0;">4º ANO</div>
<div class="t" style="left:855.50px;top:326.30px;font-size:9.3px;color:#333333;transform:scaleX(0.81);transform-origin:0 0;">4º ANO D2</div>
<div class="t" style="left:909.75px;top:326.30px;font-size:9.3px;color:#333333;transform:scaleX(0.73);transform-origin:0 0;">LÍNGUA PORTUGUESA</div>
</div>
<div class="a" style="left:266.25px;top:100.20px;width:736.95px;height:1.00px;background:#dcdcdc"></div>
<div class="a" style="left:1003.00px;top:100.40px;width:8.30px;height:345.70px;background:#f0f0f0"></div>
<div class="a" style="left:1003.00px;top:110.00px;width:8.00px;height:9.00px;background:#cdcdcd"></div>
<svg class="a" style="left:1003px;top:102px" width="8" height="6"><polyline points="1.8,4.6 4,2.4 6.2,4.6" fill="none" stroke="#444" stroke-width="1.1"/></svg>
<svg class="a" style="left:1003px;top:429px" width="8" height="6"><polyline points="1.8,1.6 4,3.8 6.2,1.6" fill="none" stroke="#444" stroke-width="1.1"/></svg>
<div class="a" style="left:266.25px;top:437.90px;width:736.75px;height:8.20px;background:#f0f0f0"></div>
<div class="a" style="left:275.00px;top:437.90px;width:446.60px;height:8.20px;background:#c9c9c9"></div>
<svg class="a" style="left:267px;top:439px" width="7" height="7"><polyline points="4.4,1.6 2.3,3.6 4.4,5.6" fill="none" stroke="#444" stroke-width="1.1"/></svg>
<svg class="a" style="left:994.5px;top:439px" width="7" height="7"><polyline points="2.3,1.6 4.4,3.6 2.3,5.6" fill="none" stroke="#444" stroke-width="1.1"/></svg>
<div class="a" style="left:266.25px;top:446.10px;width:737.55px;height:22.50px;background:#f9f9f9"></div>
<div class="t" style="left:271.75px;top:455.48px;font-size:9.0px;color:#333;transform:scaleX(0.83);transform-origin:0 0;">Número de registros: 691</div>
<div class="a" style="left:0.00px;top:472.20px;width:1024.00px;height:37.80px;background:#808081"></div>
<div class="a" style="left:0.00px;top:473.00px;width:1024.00px;height:1.00px;background:#777778"></div>
<div class="a" style="left:927.60px;top:486.20px;width:10.70px;height:10.60px;background:#ffffff"></div>
<svg class="a" style="left:927.6px;top:486.2px" width="11" height="11" viewBox="0 0 11 11"><circle cx="2.6" cy="5.3" r="1.5" fill="none" stroke="#8a8a8a" stroke-width="0.8"/><line x1="4.1" y1="5.3" x2="10" y2="5.3" stroke="#8a8a8a" stroke-width="0.8"/><line x1="8" y1="5.3" x2="8" y2="6.8" stroke="#8a8a8a" stroke-width="0.8"/><line x1="9.5" y1="5.3" x2="9.5" y2="6.5" stroke="#8a8a8a" stroke-width="0.8"/></svg>
<svg class="a" style="left:938px;top:482px" width="80" height="18" viewBox="0 0 80 18"><path d="M2.2,6.5 H8.1 M5.1,6.5 V13 M9.9,11.3 L15.8,8.2 A3.35,3.35 0 1 0 15.6,11.7 M23.9,7.4 A3.35,3.35 0 1 0 23.9,11.6 M31.7,6.5 H28.1 A1.75,1.75 0 0 0 28.1,10 H30 A1.5,1.5 0 0 1 30,13 H26.1 M34.3,6.5 L36.9,9.9 M39.7,6.5 L35,13 M47.4,6.5 H43.8 A1.75,1.75 0 0 0 43.8,10 H45.7 A1.5,1.5 0 0 1 45.7,13 H41.8 M49.9,6.5 H55.4 M52.6,6.5 V13 M57.9,11.3 L63.2,8.2 A3.0,3.35 0 1 0 63.0,11.7 M65.3,13 V8.9 A2.35,2.4 0 0 1 70,8.9 V13 M70,8.9 A2.35,2.4 0 0 1 74.7,8.9 V13" fill="none" stroke="#eeeeee" stroke-width="1.05"/></svg>
</body></html>
